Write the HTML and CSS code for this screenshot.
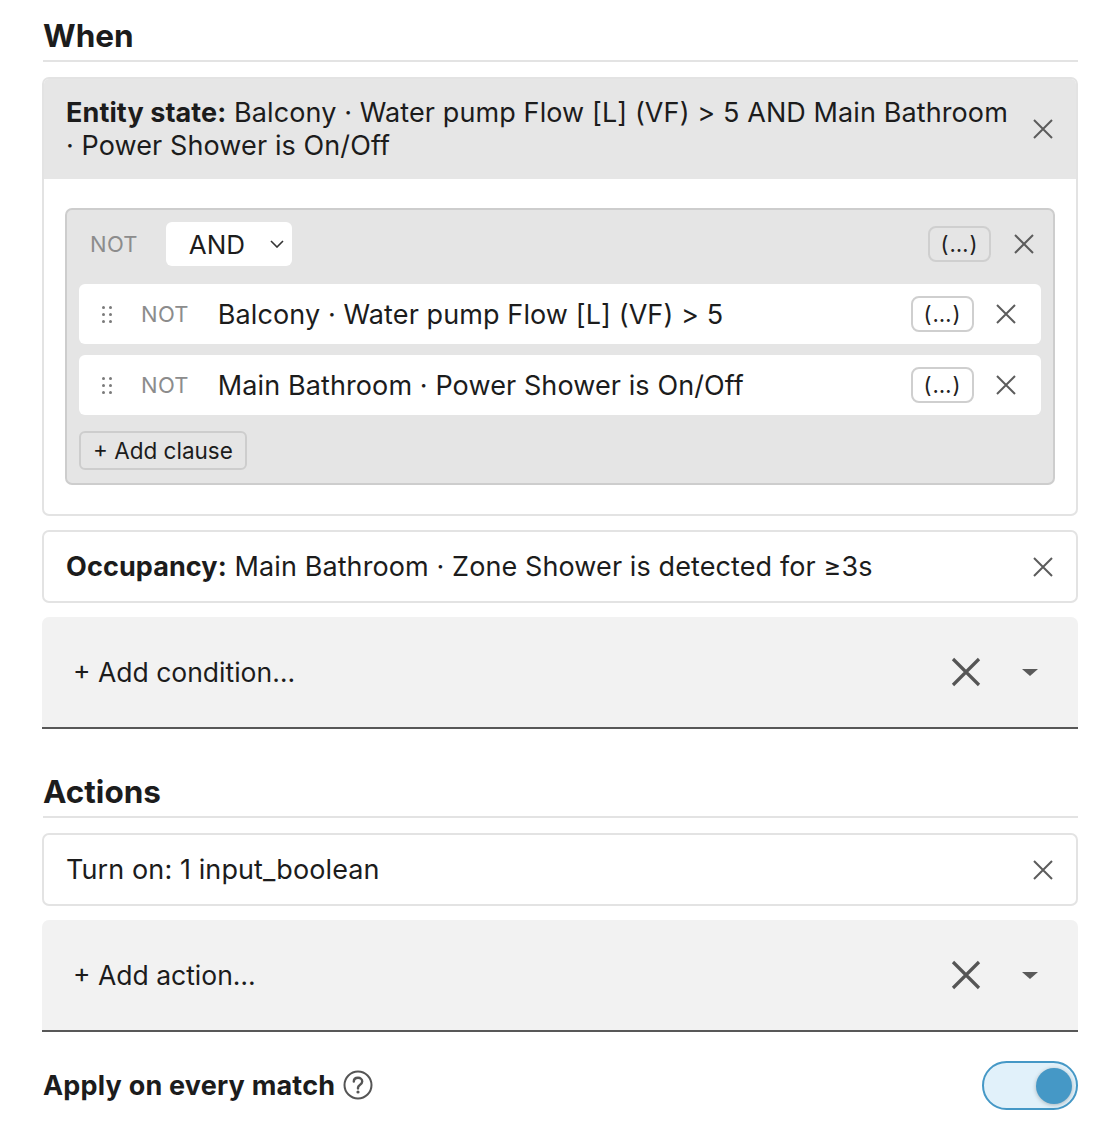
FILE: index.html
```html
<!DOCTYPE html>
<html lang="en">
<head>
<meta charset="utf-8">
<title>Rule editor</title>
<link rel="stylesheet" href="styles.css">
</head>
<body>
<main class="editor">
  <section class="section">
    <h2 class="section-title">When</h2>

    <div class="card card-expanded">
      <div class="card-head">
        <div class="card-text"><b>Entity state:</b> Balcony · Water pump Flow [L] (VF) &gt; 5 AND Main Bathroom ·&nbsp;Power Shower is On/Off</div>
        <button class="icon-btn close" aria-label="Remove">
          <svg viewBox="0 0 24 24" width="24" height="24"><path d="M3 3L21 21M21 3L3 21"/></svg>
        </button>
      </div>
      <div class="card-body">
        <div class="group">
          <div class="group-top">
            <span class="not">NOT</span>
            <div class="select">
              <span>AND</span>
              <svg class="chev" viewBox="0 0 14 8" width="14" height="8"><path d="M1 1L7 7L13 1"/></svg>
            </div>
            <span class="spacer"></span>
            <button class="paren">(…)</button>
            <button class="icon-btn x-sm" aria-label="Remove group">
              <svg viewBox="0 0 20 20" width="20" height="20"><path d="M1 1L19 19M19 1L1 19"/></svg>
            </button>
          </div>

          <div class="clause">
            <span class="grip"><i></i><i></i><i></i><i></i><i></i><i></i></span>
            <span class="not">NOT</span>
            <span class="clause-text">Balcony · Water pump Flow [L] (VF) &gt; 5</span>
            <button class="paren">(…)</button>
            <button class="icon-btn x-sm" aria-label="Remove clause">
              <svg viewBox="0 0 20 20" width="20" height="20"><path d="M1 1L19 19M19 1L1 19"/></svg>
            </button>
          </div>

          <div class="clause">
            <span class="grip"><i></i><i></i><i></i><i></i><i></i><i></i></span>
            <span class="not">NOT</span>
            <span class="clause-text">Main Bathroom · Power Shower is On/Off</span>
            <button class="paren">(…)</button>
            <button class="icon-btn x-sm" aria-label="Remove clause">
              <svg viewBox="0 0 20 20" width="20" height="20"><path d="M1 1L19 19M19 1L1 19"/></svg>
            </button>
          </div>

          <button class="add-clause">+ Add clause</button>
        </div>
      </div>
    </div>

    <div class="card card-simple">
      <div class="card-text"><b>Occupancy:</b> Main Bathroom · Zone Shower is detected for ≥3s</div>
      <button class="icon-btn close" aria-label="Remove">
        <svg viewBox="0 0 24 24" width="24" height="24"><path d="M3 3L21 21M21 3L3 21"/></svg>
      </button>
    </div>

    <div class="picker">
      <span class="picker-label">+ Add condition…</span>
      <button class="icon-btn clear" aria-label="Clear">
        <svg viewBox="0 0 30 30" width="30" height="30"><path d="M2 2L28 28M28 2L2 28"/></svg>
      </button>
      <span class="caret"></span>
    </div>
  </section>

  <section class="section">
    <h2 class="section-title">Actions</h2>

    <div class="card card-simple">
      <div class="card-text">Turn on: 1 input_boolean</div>
      <button class="icon-btn close" aria-label="Remove">
        <svg viewBox="0 0 24 24" width="24" height="24"><path d="M3 3L21 21M21 3L3 21"/></svg>
      </button>
    </div>

    <div class="picker">
      <span class="picker-label">+ Add action…</span>
      <button class="icon-btn clear" aria-label="Clear">
        <svg viewBox="0 0 30 30" width="30" height="30"><path d="M2 2L28 28M28 2L2 28"/></svg>
      </button>
      <span class="caret"></span>
    </div>
  </section>

  <div class="option">
    <span class="option-label">Apply on every match</span>
    <svg class="help" viewBox="0 0 30 30" width="30" height="30">
      <circle cx="15" cy="15" r="13.5"/>
      <path d="M10.8 11.6C10.8 9.2 12.6 7.8 15 7.8C17.4 7.8 19.2 9.3 19.2 11.4C19.2 13.2 18.2 14 16.8 14.9C15.6 15.7 15 16.3 15 17.8V18.4"/>
      <circle class="dot" cx="15" cy="22" r="1.6"/>
    </svg>
    <span class="spacer"></span>
    <span class="toggle on"><span class="knob"></span></span>
  </div>
</main>
</body>
</html>
```

FILE: styles.css
```css
* { box-sizing: border-box; }

html, body {
  margin: 0;
  padding: 0;
  background: #fff;
}

body {
  font-family: Inter, "Noto Sans", "Liberation Sans", sans-serif;
  color: #1c1c1c;
}

.editor {
  width: 1036px;
  margin-left: 42px;
  padding-top: 14px;
}

button {
  font: inherit;
  color: inherit;
  background: none;
  border: 0;
  padding: 0;
  cursor: pointer;
}

.spacer { flex: 1; }

/* section headings */
.section-title {
  margin: 0 0 15px 1px;
  font-size: 31.5px;
  line-height: 44px;
  font-weight: 700;
  padding-bottom: 2px;
  border-bottom: 2px solid #e3e3e3;
}

.section + .section .section-title { margin-top: 41px; }

/* cards */
.card {
  border: 2px solid #e3e3e3;
  border-radius: 7px;
  background: #fff;
  margin-bottom: 14px;
}

.card-text {
  flex: 1;
  font-size: 27px;
  line-height: 33px;
  letter-spacing: 0.1px;
}

.card-text b { font-weight: 700; }

.card-head {
  display: flex;
  align-items: center;
  background: #e6e6e6;
  border-radius: 5px 5px 0 0;
  padding: 17px 21px 17px 22px;
}

.card-simple {
  display: flex;
  align-items: center;
  padding: 0 21px 0 22px;
  height: 73px;
}

.icon-btn svg path {
  fill: none;
  stroke: #5c5c5c;
  stroke-width: 2;
  stroke-linecap: butt;
}

.close {
  display: flex;
  flex: none;
  margin-left: 8px;
  margin-right: 0;
}

.card-body {
  padding: 29px 21px 29px 21px;
}

/* logical group */
.group {
  background: #e5e5e5;
  border: 2px solid #cdcdcd;
  border-radius: 7px;
  padding: 12px 12px 13px 12px;
}

.group-top {
  display: flex;
  align-items: center;
  height: 44px;
  margin-bottom: 18px;
  padding-left: 11px;
}

.not {
  color: #8c8c8c;
  font-size: 22px;
  letter-spacing: 0.3px;
}

.select {
  display: flex;
  align-items: center;
  margin-left: 28px;
  height: 44px;
  width: 126px;
  background: #fff;
  border-radius: 6px;
  padding-left: 23px;
  font-size: 26px;
}

.chev {
  margin-left: auto;
  margin-right: 8px;
}

.chev path {
  fill: none;
  stroke: #333;
  stroke-width: 1.6;
}

.paren {
  font-size: 22px;
  line-height: 30px;
  height: 36px;
  width: 63px;
  border: 2px solid #cfcfcf;
  border-radius: 8px;
  color: #222;
  letter-spacing: 1px;
}

.group-top .paren { background: #e5e5e5; margin-right: 23px; }

.x-sm { display: flex; margin-right: 7px; }
.x-sm svg path { stroke-width: 2; }

.clause {
  display: flex;
  align-items: center;
  height: 60px;
  background: #fff;
  border-radius: 6px;
  margin-bottom: 11px;
  padding-left: 23px;
}

.clause .paren { background: #fff; margin-right: 22px; }
.clause .x-sm { margin-right: 25px; }

.grip {
  display: grid;
  grid-template-columns: 3px 3px;
  grid-auto-rows: 3px;
  column-gap: 4px;
  row-gap: 4px;
  width: 10px;
}

.grip i {
  display: block;
  width: 3px;
  height: 3px;
  border-radius: 50%;
  background: #7a7a7a;
}

.clause .not { margin-left: 29px; }

.clause-text {
  flex: 1;
  margin-left: 29px;
  font-size: 27px;
  letter-spacing: 0.1px;
}

/* sits 16px below the last clause (its margin collapses with the clause's) */
.add-clause {
  margin-top: 16px;
  display: block;
  height: 39px;
  padding: 0 12px;
  font-size: 22.5px;
  background: #e5e5e5;
  border: 2px solid #cdcdcd;
  border-radius: 6px;
  color: #1c1c1c;
}

/* add pickers */
.picker {
  display: flex;
  align-items: center;
  height: 112px;
  background: #f2f2f2;
  border-radius: 7px 7px 0 0;
  border-bottom: 2px solid #585858;
  padding-left: 31px;
}

.picker-label {
  flex: 1;
  font-size: 26.5px;
}

.clear { display: flex; margin-right: 41px; }
.clear svg path { stroke: #555; stroke-width: 3.2; }

.caret {
  width: 0;
  height: 0;
  border-left: 8px solid transparent;
  border-right: 8px solid transparent;
  border-top: 7px solid #5a5a5a;
  margin-right: 40px;
}

/* option row */
.option {
  display: flex;
  align-items: center;
  margin-top: 28px;
  height: 50px;
}

.option-label {
  font-size: 27px;
  font-weight: 700;
  margin-left: 1px;
  letter-spacing: 0.2px;
}

.help {
  margin-left: 8px;
}

.help circle {
  fill: none;
  stroke: #555;
  stroke-width: 2;
}

.help path {
  fill: none;
  stroke: #555;
  stroke-width: 2.4;
  stroke-linecap: round;
}

.help .dot { fill: #555; stroke: none; }

.toggle {
  position: relative;
  display: block;
  width: 96px;
  height: 49px;
  border-radius: 25px;
  border: 2px solid #4598c6;
  background: #e1f1fa;
}

.toggle .knob {
  position: absolute;
  top: 5px;
  right: 4px;
  width: 36px;
  height: 36px;
  border-radius: 50%;
  background: #4598c6;
  box-shadow: 0 1px 4px rgba(0, 0, 0, 0.25);
}
```
